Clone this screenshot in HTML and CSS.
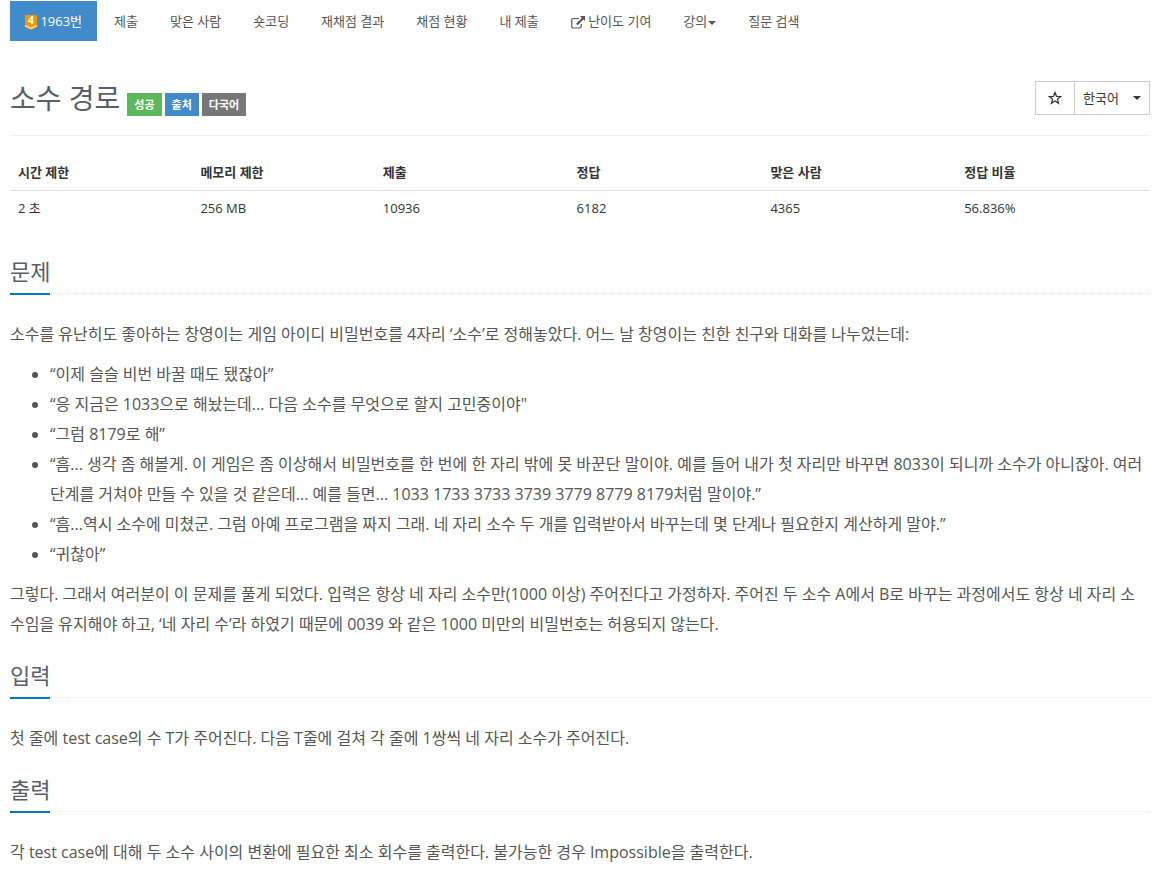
FILE: index.html
```html
<!DOCTYPE html>
<html lang="ko">
<head>
    <meta charset="UTF-8">
    <meta name="viewport" content="width=device-width, initial-scale=1.0">
    <title>1963번: 소수 경로</title>
    <link rel="stylesheet" href="styles.css">
</head>
<body>
    <div class="container">
        <!-- 문제 메뉴 -->
        <nav>
            <ul class="problem-menu">
                <li class="active">
                    <a href="#">
                        <svg class="tier" viewBox="0 0 12 15" aria-hidden="true">
                            <path fill="#ec9a00" d="M0 1.5Q0 0 1.5 0h9Q12 0 12 1.5V12L6 15 0 12z"/>
                            <path fill="none" stroke="#fff" stroke-width="1" d="M0 10.6l6 2.8 6-2.8"/>
                            <text x="6" y="9" text-anchor="middle">4</text>
                        </svg>
                        1963번
                    </a>
                </li>
                <li><a href="#">제출</a></li>
                <li><a href="#">맞은 사람</a></li>
                <li><a href="#">숏코딩</a></li>
                <li><a href="#">재채점 결과</a></li>
                <li><a href="#">채점 현황</a></li>
                <li><a href="#">내 제출</a></li>
                <li>
                    <a href="#">
                        <svg class="external" viewBox="0 0 14 13" aria-hidden="true">
                            <path fill="none" stroke="#555" stroke-width="1.2" d="M8 2.5H2.5Q.7 2.5.7 4.3v6Q.7 12 2.5 12h6q1.8 0 1.8-1.7V8"/>
                            <path fill="#555" d="M9 0h5v5l-1.6-1.6-5.8 5.8-1.5-1.5 5.8-5.8z"/>
                        </svg>
                        난이도 기여
                    </a>
                </li>
                <li><a href="#">강의<span class="caret"></span></a></li>
                <li><a href="#">질문 검색</a></li>
            </ul>
        </nav>

        <!-- 제목 -->
        <header class="page-header">
            <h1>소수 경로</h1>
            <div class="labels">
                <span class="label label-success">성공</span>
                <span class="label label-source">출처</span>
                <span class="label label-lang">다국어</span>
            </div>
            <div class="btn-group">
                <button type="button" class="btn btn-star" aria-label="즐겨찾기">
                    <svg viewBox="0 0 14 14" aria-hidden="true">
                        <path fill="none" stroke="#333" stroke-width="1.2" d="M7 1.4l1.5 3.9 4.3.2-3.4 2.7 1.2 4.1L7 10l-3.6 2.3 1.2-4.1-3.4-2.7 4.3-.2z"/>
                    </svg>
                </button>
                <button type="button" class="btn btn-lang">한국어<span class="caret"></span></button>
            </div>
        </header>

        <!-- 문제 정보 -->
        <table class="problem-info">
            <thead>
                <tr>
                    <th class="limit">시간 제한</th>
                    <th class="limit">메모리 제한</th>
                    <th>제출</th>
                    <th>정답</th>
                    <th>맞은 사람</th>
                    <th>정답 비율</th>
                </tr>
            </thead>
            <tbody>
                <tr>
                    <td>2 초</td>
                    <td>256 MB</td>
                    <td>10936</td>
                    <td>6182</td>
                    <td>4365</td>
                    <td>56.836%</td>
                </tr>
            </tbody>
        </table>

        <section id="description">
            <div class="headline"><h2>문제</h2></div>
            <div class="problem-text">
                <p>소수를 유난히도 좋아하는 창영이는 게임 아이디 비밀번호를 4자리 ‘소수’로 정해놓았다. 어느 날 창영이는 친한 친구와 대화를 나누었는데:</p>
                <ul>
                    <li>“이제 슬슬 비번 바꿀 때도 됐잖아”</li>
                    <li>“응 지금은 1033으로 해놨는데... 다음 소수를 무엇으로 할지 고민중이야"</li>
                    <li>“그럼 8179로 해”</li>
                    <li>“흠... 생각 좀 해볼게. 이 게임은 좀 이상해서 비밀번호를 한 번에 한 자리 밖에 못 바꾼단 말이야. 예를 들어 내가 첫 자리만 바꾸면 8033이 되니까 소수가 아니잖아. 여러 단계를 거쳐야 만들 수 있을 것 같은데... 예를 들면... 1033 1733 3733 3739 3779 8779 8179처럼 말이야.”</li>
                    <li>“흠...역시 소수에 미쳤군. 그럼 아예 프로그램을 짜지 그래. 네 자리 소수 두 개를 입력받아서 바꾸는데 몇 단계나 필요한지 계산하게 말야.”</li>
                    <li>“귀찮아”</li>
                </ul>
                <p>그렇다. 그래서 여러분이 이 문제를 풀게 되었다. 입력은 항상 네 자리 소수만(1000 이상) 주어진다고 가정하자. 주어진 두 소수 A에서 B로 바꾸는 과정에서도 항상 네 자리 소수임을 유지해야 하고, ‘네 자리 수’라 하였기 때문에 0039 와 같은 1000 미만의 비밀번호는 허용되지 않는다.</p>
            </div>
        </section>

        <section id="input">
            <div class="headline"><h2>입력</h2></div>
            <div class="problem-text">
                <p>첫 줄에 test case의 수 T가 주어진다. 다음 T줄에 걸쳐 각 줄에 1쌍씩 네 자리 소수가 주어진다.</p>
            </div>
        </section>

        <section id="output">
            <div class="headline"><h2>출력</h2></div>
            <div class="problem-text">
                <p>각 test case에 대해 두 소수 사이의 변환에 필요한 최소 회수를 출력한다. 불가능한 경우 Impossible을 출력한다.</p>
            </div>
        </section>
    </div>
</body>
</html>
```
FILE: styles.css
```css
* {
    box-sizing: border-box;
}

body {
    margin: 0;
    font-family: "Open Sans", "Noto Sans CJK KR", sans-serif;
    font-size: 13px;
    line-height: 20px;
    color: #333;
    background-color: #fff;
}

h1, h2, p, ul {
    margin: 0;
    padding: 0;
    font-weight: normal;
}

.container {
    padding: 1px 13px 0 10px;
}

.caret {
    display: inline-block;
    border-top: 4px solid;
    border-left: 4px solid transparent;
    border-right: 4px solid transparent;
    vertical-align: middle;
}

/* 문제 메뉴 */
.problem-menu {
    display: flex;
    flex-wrap: wrap;
    gap: 2px;
    list-style: none;
}

.problem-menu a {
    display: block;
    padding: 10px 15px;
    color: #555;
    text-decoration: none;
}

.problem-menu .active a {
    color: #fff;
    background-color: #428bca;
}

.problem-menu svg {
    vertical-align: middle;
}

.problem-menu .caret {
    margin-left: 1px;
}

.tier {
    width: 12px;
    height: 15px;
    overflow: visible;
}

.tier text {
    font-size: 10px;
    font-weight: bold;
    fill: #fff;
}

.external {
    width: 14px;
    height: 13px;
}

/* 제목 */
.page-header {
    display: flex;
    align-items: flex-end;
    gap: 7px;
    margin-top: 40px;
    padding-bottom: 20px;
    border-bottom: 1px solid #eee;
}

.page-header h1 {
    font-size: 28px;
    line-height: 34px;
    color: #585f69;
}

.labels {
    display: flex;
    gap: 3px;
    margin-bottom: -1px;
}

.label {
    padding: 2px 7px 1px;
    font-size: 11px;
    font-weight: bold;
    color: #fff;
}

.label-success {
    background-color: #5cb85c;
}

.label-source {
    background-color: #428bca;
}

.label-lang {
    background-color: #777;
}

.btn-group {
    display: flex;
    margin-left: auto;
}

.btn {
    display: flex;
    align-items: center;
    height: 34px;
    border: 1px solid #ccc;
    background-color: #fff;
    font: inherit;
    color: #333;
}

.btn-star {
    padding: 0 12px;
    border-right: none;
}

.btn-star svg {
    width: 14px;
    height: 14px;
}

.btn-lang {
    gap: 14px;
    padding: 0 8px;
}

/* 문제 정보 */
.problem-info {
    width: 100%;
    margin: 19px 0 29px;
    table-layout: fixed;
    border-collapse: collapse;
    text-align: left;
}

.problem-info th,
.problem-info td {
    padding: 8px;
    line-height: 19px;
}

.problem-info th {
    border-bottom: 1px solid #ddd;
}

.problem-info .limit {
    width: 16%;
}

/* 문제 본문 */
.headline {
    margin: 20px 0 25px;
    border-bottom: 1px dotted #e4e9f0;
}

.headline h2 {
    display: inline-block;
    margin-bottom: -2px;
    padding-bottom: 5px;
    border-bottom: 2px solid #0076bd;
    font-size: 22px;
    line-height: 33px;
    color: #585f69;
}

.problem-text {
    padding-right: 4px;
    font-size: 16px;
    font-weight: 300;
    line-height: 30px;
    color: #555;
}

.problem-text p,
.problem-text ul {
    margin-bottom: 10px;
}

.problem-text ul {
    padding-left: 40px;
}
```
